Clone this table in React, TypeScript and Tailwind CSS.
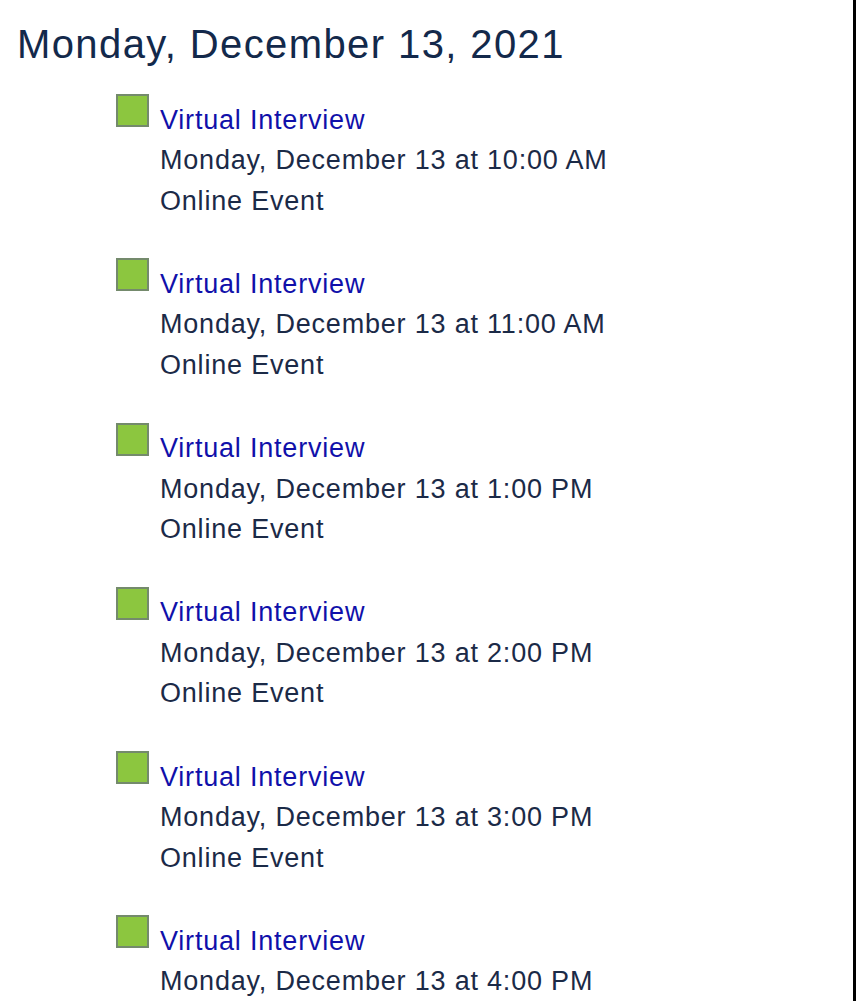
const events = [
  "Monday, December 13 at 10:00 AM",
  "Monday, December 13 at 11:00 AM",
  "Monday, December 13 at 1:00 PM",
  "Monday, December 13 at 2:00 PM",
  "Monday, December 13 at 3:00 PM",
  "Monday, December 13 at 4:00 PM",
];

export default function App() {
  return (
    <div
      className="w-[856px] h-[1001px] overflow-hidden bg-white border-r-[3px] border-black"
      style={{ fontFamily: '"Liberation Sans", Arial, sans-serif' }}
    >
      <h1 className="pl-[17px] pt-[20px] text-[40px] leading-[48px] tracking-[1.4px] text-[#13294b]">
        Monday, December 13, 2021
      </h1>

      <ul className="pl-[116px] pt-[26px] flex flex-col gap-[37.3px]">
        {events.map((when, i) => (
          <li key={i} className="flex items-start gap-[11px]">
            <span className="w-[33px] h-[33px] shrink-0 bg-[#8cc63f] border-2 border-[#748a6c]" />
            <div className="pt-[5.5px] flex flex-col text-[27px] leading-[40.5px] tracking-[0.8px] text-[#1b2a47]">
              <a href="#" className="text-[#1010aa]">Virtual Interview</a>
              <span>{when}</span>
              <span>Online Event</span>
            </div>
          </li>
        ))}
      </ul>
    </div>
  );
}
